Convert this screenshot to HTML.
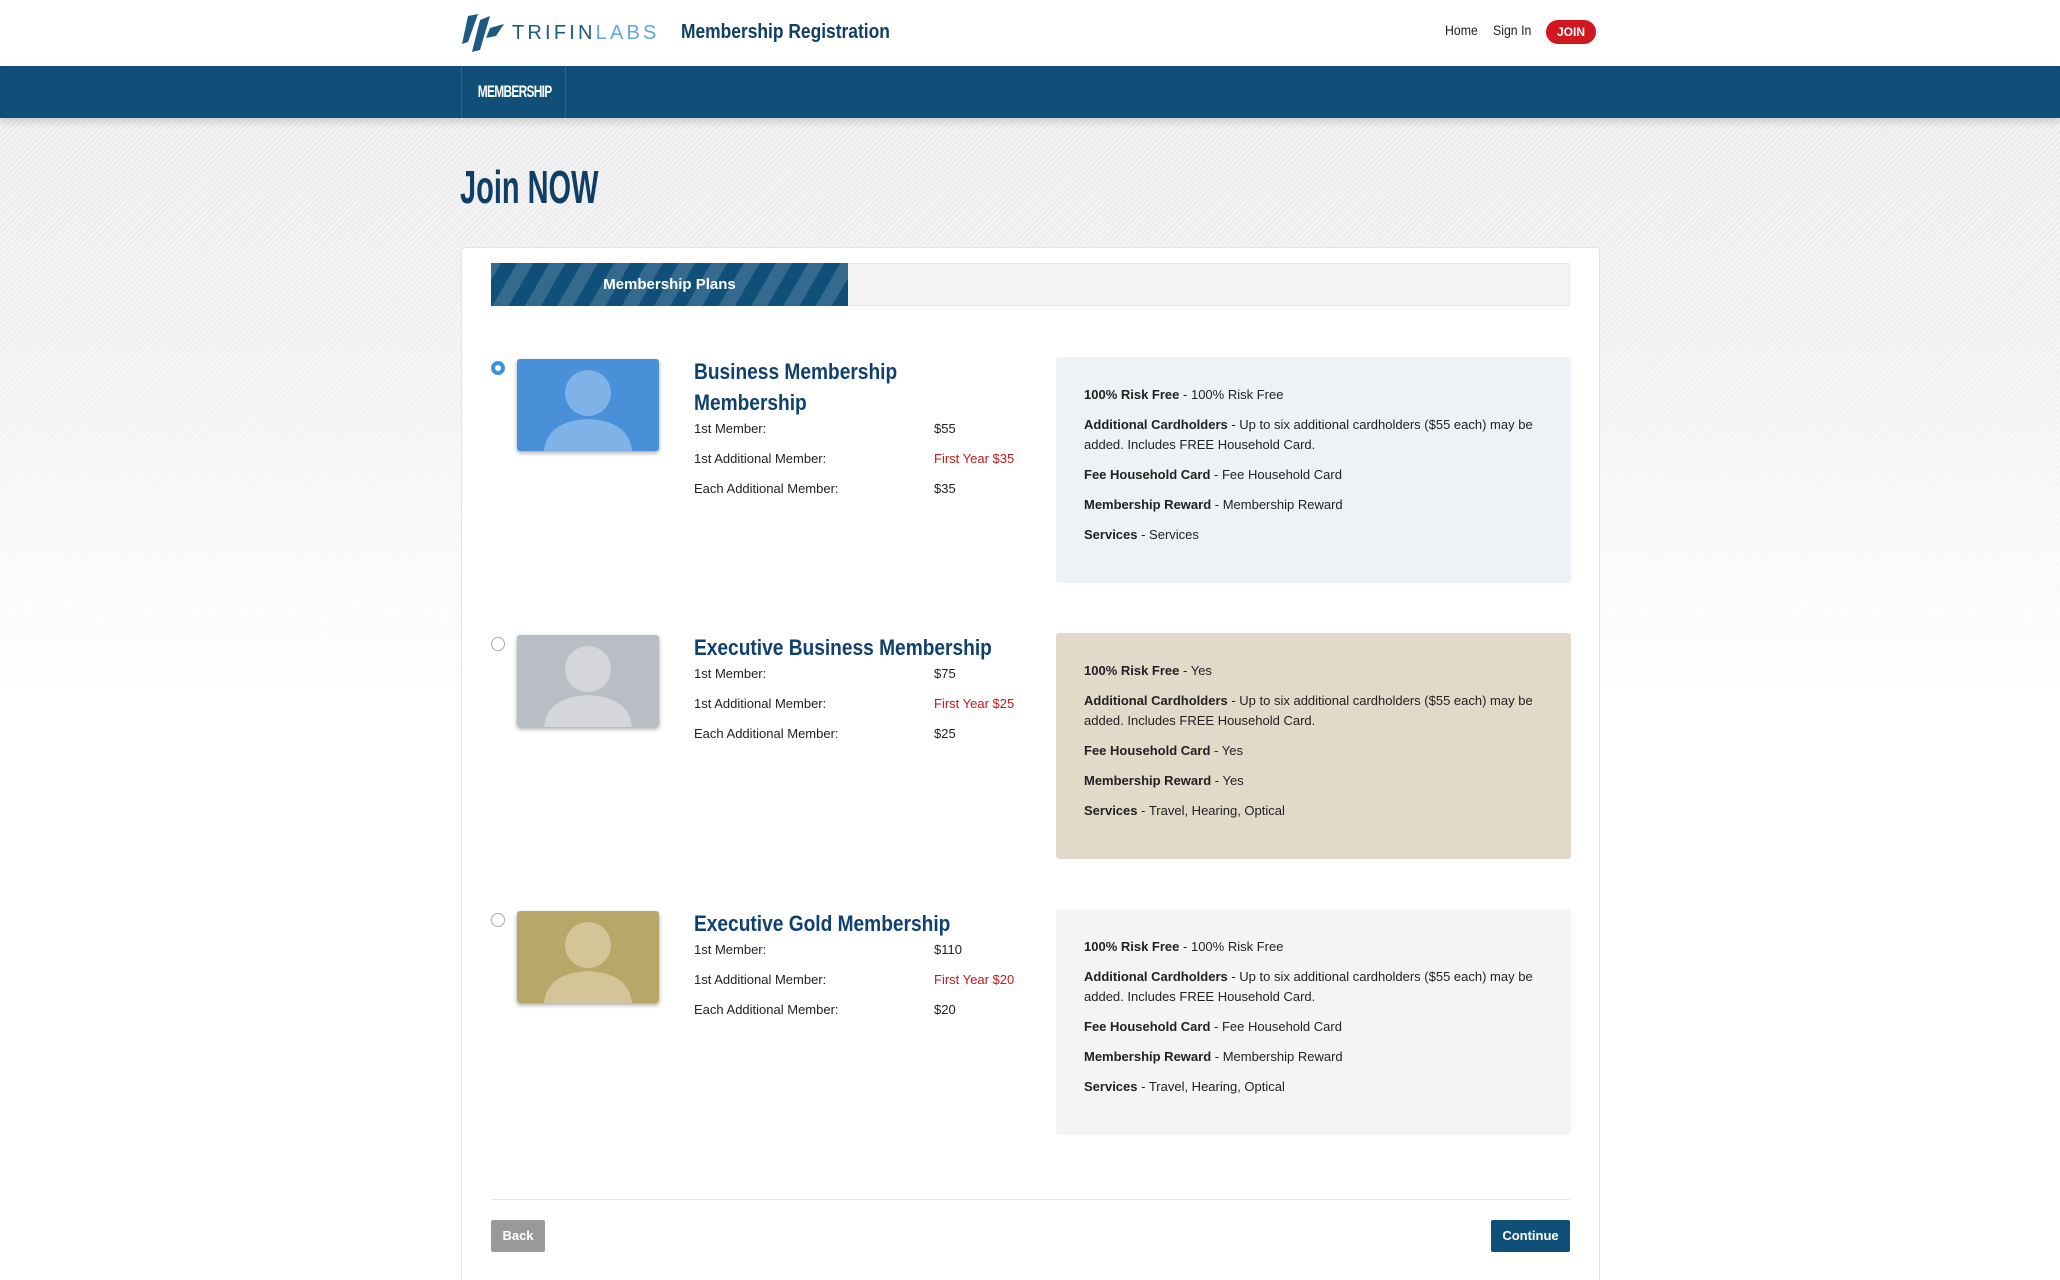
<!DOCTYPE html>
<html style="width:2060px;height:1280px;overflow:hidden"><head><meta charset="utf-8"><style>
*{box-sizing:border-box;margin:0;padding:0}
body{width:2060px;height:1280px;overflow:hidden;font-family:"Liberation Sans",sans-serif;color:#222;position:relative;
background:linear-gradient(to bottom,rgba(255,255,255,0) 0,rgba(255,255,255,0.2) 300px,#fff 700px),repeating-linear-gradient(135deg,#e9e9e9 0 2px,#f3f3f3 2px 4px);}
.abs{position:absolute}
.hdr{left:0;top:0;width:2060px;height:66px;background:#fff}
.nav{left:0;top:66px;width:2060px;height:52px;background:#0f4f78;box-shadow:0 4px 8px rgba(0,0,0,.15)}
.navitem{left:461px;top:0;width:105px;height:52px;border-left:1px solid #2a6790;border-right:1px solid #2a6790;color:#fff;font-weight:bold;font-size:17px;line-height:52px;text-align:center;letter-spacing:-1px}
.cond{display:inline-block;transform:scaleX(.78);transform-origin:left center;white-space:nowrap}
.panel{left:461px;top:247px;width:1139px;height:1033px;background:#fff;border:1px solid #e3e3e3;border-bottom:none;border-radius:4px 4px 0 0}
.prog{left:491px;top:263px;width:1079px;height:43px;background:#f4f4f4;border:1px solid #e6e6e6;border-radius:2px}
.bar{left:491px;top:263px;width:357px;height:43px;background:repeating-linear-gradient(-60deg,#0f4f78 0 14px,#336a8d 14px 28px);color:#fff;font-weight:bold;font-size:15px;line-height:43px;text-align:center}
.radio{width:14px;height:14px;border-radius:50%;border:1px solid #aaa;background:#fff}
.radio.on{border:4px solid #3d8fe8}
.img{width:142px;height:92px;border-radius:3px;box-shadow:0 2px 4px rgba(0,0,0,.35);overflow:hidden}
.t{color:#0f4070;font-weight:bold;font-size:22px;line-height:31px;transform:scaleX(.87);transform-origin:left top;white-space:nowrap}
.l{font-size:13px;color:#222}
.red{color:#c4161c}
.box{width:515px;height:226px;border-radius:3px;font-size:13px;line-height:20px;padding:28px 28px 0 28px}
.box p{margin-bottom:10px}
.btn{font-size:13px;font-weight:bold;color:#fff;text-align:center;line-height:32px;border-radius:2px}
</style></head><body>
<div class="abs hdr">
 <svg class="abs" style="left:460px;top:14px" width="46" height="38" viewBox="0 0 46 38"><path d="M8 2 L18 0 L8 28 L2 30Z M20 6 L30 2 L20 36 L12 38Z M30 14 L44 10 L36 22 L26 24Z" fill="#1d5a82"/></svg>
 <div class="abs" style="left:512px;top:22px;font-size:20px;letter-spacing:3.2px;color:#1d5a82">TRIFIN<span style="color:#5fa7dd">LABS</span></div>
 <div class="abs" style="left:681px;top:21px;font-size:20px;font-weight:bold;color:#0f3f66"><span class="cond" style="transform:scaleX(.87)">Membership Registration</span></div>
 <div class="abs" style="left:1445px;top:22px;font-size:14px;color:#222"><span class="cond" style="transform:scaleX(.88)">Home</span></div>
 <div class="abs" style="left:1493px;top:22px;font-size:14px;color:#222"><span class="cond" style="transform:scaleX(.88)">Sign In</span></div>
 <div class="abs" style="left:1546px;top:20px;width:50px;height:24px;border-radius:12px;background:#d1171f;color:#fff;font-weight:bold;font-size:12px;line-height:24px;text-align:center">JOIN</div>
</div>
<div class="abs nav"><div class="abs navitem"><span class="cond" style="transform:scaleX(.7);transform-origin:center">MEMBERSHIP</span></div></div>
<div class="abs" style="left:460px;top:160px;font-size:46px;font-weight:bold;color:#0f3f66"><span class="cond" style="transform:scaleX(.63)">Join NOW</span></div>
<div class="abs panel"></div>
<div class="abs prog"></div>
<div class="abs bar">Membership Plans</div>

<div class="abs radio on" style="left:491px;top:361px"></div>
<div class="abs img" style="left:517px;top:359px;background:#4a90d9"><svg width="142" height="92"><circle cx="71" cy="34" r="23" fill="#7fb2e6"/><path d="M27 92 Q30 62 71 60 Q112 62 115 92Z" fill="#7fb2e6"/></svg></div>
<div class="abs t" style="left:694px;top:356px">Business Membership<br>Membership</div>
<div class="abs l" style="left:694px;top:421px">1st Member:</div><div class="abs l" style="left:934px;top:421px">$55</div>
<div class="abs l" style="left:694px;top:451px">1st Additional Member:</div><div class="abs l red" style="left:934px;top:451px">First Year $35</div>
<div class="abs l" style="left:694px;top:481px">Each Additional Member:</div><div class="abs l" style="left:934px;top:481px">$35</div>
<div class="abs box" style="left:1056px;top:357px;background:#eef1f5">
<p><b>100% Risk Free</b> - 100% Risk Free</p><p><b>Additional Cardholders</b> - Up to six additional cardholders ($55 each) may be added. Includes FREE Household Card.</p><p><b>Fee Household Card</b> - Fee Household Card</p><p><b>Membership Reward</b> - Membership Reward</p><p><b>Services</b> - Services</p></div>

<div class="abs radio" style="left:491px;top:637px"></div>
<div class="abs img" style="left:517px;top:635px;background:#b9bec4"><svg width="142" height="92"><circle cx="71" cy="34" r="23" fill="#d4d6d9"/><path d="M27 92 Q30 62 71 60 Q112 62 115 92Z" fill="#d4d6d9"/></svg></div>
<div class="abs t" style="left:694px;top:632px">Executive Business Membership</div>
<div class="abs l" style="left:694px;top:666px">1st Member:</div><div class="abs l" style="left:934px;top:666px">$75</div>
<div class="abs l" style="left:694px;top:696px">1st Additional Member:</div><div class="abs l red" style="left:934px;top:696px">First Year $25</div>
<div class="abs l" style="left:694px;top:726px">Each Additional Member:</div><div class="abs l" style="left:934px;top:726px">$25</div>
<div class="abs box" style="left:1056px;top:633px;background:#e3d9c9">
<p><b>100% Risk Free</b> - Yes</p><p><b>Additional Cardholders</b> - Up to six additional cardholders ($55 each) may be added. Includes FREE Household Card.</p><p><b>Fee Household Card</b> - Yes</p><p><b>Membership Reward</b> - Yes</p><p><b>Services</b> - Travel, Hearing, Optical</p></div>

<div class="abs radio" style="left:491px;top:913px"></div>
<div class="abs img" style="left:517px;top:911px;background:#b9a768"><svg width="142" height="92"><circle cx="71" cy="34" r="23" fill="#d3c597"/><path d="M27 92 Q30 62 71 60 Q112 62 115 92Z" fill="#d3c597"/></svg></div>
<div class="abs t" style="left:694px;top:908px">Executive Gold Membership</div>
<div class="abs l" style="left:694px;top:942px">1st Member:</div><div class="abs l" style="left:934px;top:942px">$110</div>
<div class="abs l" style="left:694px;top:972px">1st Additional Member:</div><div class="abs l red" style="left:934px;top:972px">First Year $20</div>
<div class="abs l" style="left:694px;top:1002px">Each Additional Member:</div><div class="abs l" style="left:934px;top:1002px">$20</div>
<div class="abs box" style="left:1056px;top:909px;background:#f4f4f4">
<p><b>100% Risk Free</b> - 100% Risk Free</p><p><b>Additional Cardholders</b> - Up to six additional cardholders ($55 each) may be added. Includes FREE Household Card.</p><p><b>Fee Household Card</b> - Fee Household Card</p><p><b>Membership Reward</b> - Membership Reward</p><p><b>Services</b> - Travel, Hearing, Optical</p></div>

<div class="abs" style="left:491px;top:1199px;width:1079px;height:1px;background:#e6e6e6"></div>
<div class="abs btn" style="left:491px;top:1220px;width:54px;background:#999">Back</div>
<div class="abs btn" style="left:1491px;top:1220px;width:79px;background:#0f4f78">Continue</div>
</body></html>
